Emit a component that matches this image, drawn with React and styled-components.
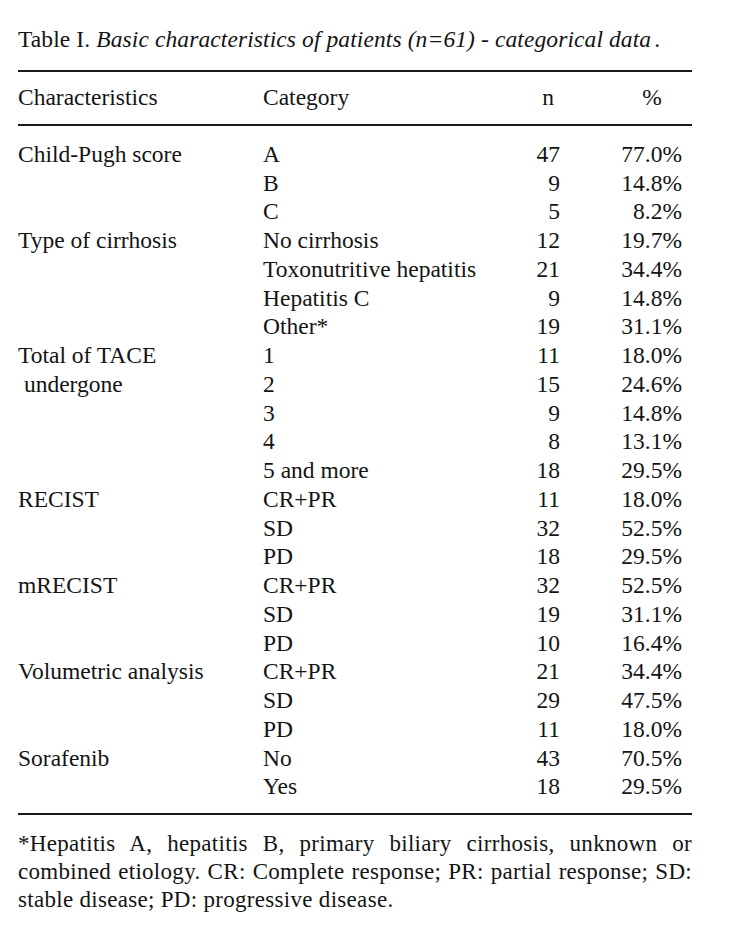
import React from "react";
import styled, { createGlobalStyle } from "styled-components";

const GlobalStyle = createGlobalStyle`
  html, body {
    margin: 0;
    padding: 0;
    background: #fff;
  }
  body {
    font-family: "Liberation Serif", "Times New Roman", serif;
    color: #141414;
  }
`;

const groups = [
  {
    label: "Child-Pugh score",
    rows: [
      ["A", "47", "77.0%"],
      ["B", "9", "14.8%"],
      ["C", "5", "8.2%"],
    ],
  },
  {
    label: "Type of cirrhosis",
    rows: [
      ["No cirrhosis", "12", "19.7%"],
      ["Toxonutritive hepatitis", "21", "34.4%"],
      ["Hepatitis C", "9", "14.8%"],
      ["Other*", "19", "31.1%"],
    ],
  },
  {
    label: ["Total of TACE", "\u00a0undergone"],
    rows: [
      ["1", "11", "18.0%"],
      ["2", "15", "24.6%"],
      ["3", "9", "14.8%"],
      ["4", "8", "13.1%"],
      ["5 and more", "18", "29.5%"],
    ],
  },
  {
    label: "RECIST",
    rows: [
      ["CR+PR", "11", "18.0%"],
      ["SD", "32", "52.5%"],
      ["PD", "18", "29.5%"],
    ],
  },
  {
    label: "mRECIST",
    rows: [
      ["CR+PR", "32", "52.5%"],
      ["SD", "19", "31.1%"],
      ["PD", "10", "16.4%"],
    ],
  },
  {
    label: "Volumetric analysis",
    rows: [
      ["CR+PR", "21", "34.4%"],
      ["SD", "29", "47.5%"],
      ["PD", "11", "18.0%"],
    ],
  },
  {
    label: "Sorafenib",
    rows: [
      ["No", "43", "70.5%"],
      ["Yes", "18", "29.5%"],
    ],
  },
];

const noteLines = [
  "*Hepatitis A, hepatitis B, primary biliary cirrhosis, unknown or",
  "combined etiology. CR: Complete response; PR: partial response; SD:",
  "stable disease; PD: progressive disease.",
];

const App = () => {
  return (
    <>
      <GlobalStyle />
      <Page>
        <Caption>
          Table I. <em>Basic characteristics of patients (n=61) - categorical data</em>
          <Dot>.</Dot>
        </Caption>

        <Rule />
        <HeadRow>
          <Cell>Characteristics</Cell>
          <Cell>Category</Cell>
          <HeadNum>n</HeadNum>
          <HeadPct>%</HeadPct>
        </HeadRow>
        <Rule />

        <Body>
          {groups.map((g, gi) => (
            <Group key={gi}>
              <Label>
                {Array.isArray(g.label)
                  ? g.label.map((l, li) => <div key={li}>{l}</div>)
                  : g.label}
              </Label>
              <div>
                {g.rows.map(([cat, n, pct], ri) => (
                  <DataRow key={ri}>
                    <Cell>{cat}</Cell>
                    <Num>{n}</Num>
                    <Pct>{pct}</Pct>
                  </DataRow>
                ))}
              </div>
            </Group>
          ))}
        </Body>
        <Rule />

        <Note>
          {noteLines.map((l, i) => (
            <NoteLine key={i} $last={i === noteLines.length - 1}>
              {l}
            </NoteLine>
          ))}
        </Note>
      </Page>
    </>
  );
};

export default App;

const Page = styled.div`
  width: 674px;
  padding: 25px 0 40px 18px;
  font-size: 23.5px;
`;

const Caption = styled.div`
  line-height: 28px;
  white-space: nowrap;
  letter-spacing: 0.1px;
  margin-bottom: 17px;

  em {
    font-style: italic;
  }
`;

const Dot = styled.span`
  margin-left: 3px;
`;

const Rule = styled.div`
  height: 2px;
  background: #1a1a1a;
`;

const HeadRow = styled.div`
  display: grid;
  grid-template-columns: 245px 273px 24px 122px;
  line-height: 28.75px;
  padding: 11px 0 12px;
`;

const Cell = styled.div`
  white-space: nowrap;
`;

const HeadNum = styled.div`
  text-align: center;
`;

const HeadPct = styled.div`
  padding-left: 62px;
  width: 60px;
  text-align: center;
`;

const Body = styled.div`
  padding: 14px 0 12px;
`;

const Group = styled.div`
  display: grid;
  grid-template-columns: 245px 1fr;
  line-height: 28.75px;
`;

const Label = styled.div`
  white-space: nowrap;
`;

const DataRow = styled.div`
  display: grid;
  grid-template-columns: 273px 24px 122px;
`;

const Num = styled.div`
  text-align: right;
  white-space: nowrap;
`;

const Pct = styled.div`
  text-align: right;
  width: 122px;
  white-space: nowrap;
`;

const Note = styled.div`
  margin-top: 15px;
  font-size: 23px;
  line-height: 28px;
  letter-spacing: 0.3px;
`;

const NoteLine = styled.div`
  white-space: nowrap;
  text-align: justify;
  text-align-last: ${({ $last }) => ($last ? "left" : "justify")};
`;
